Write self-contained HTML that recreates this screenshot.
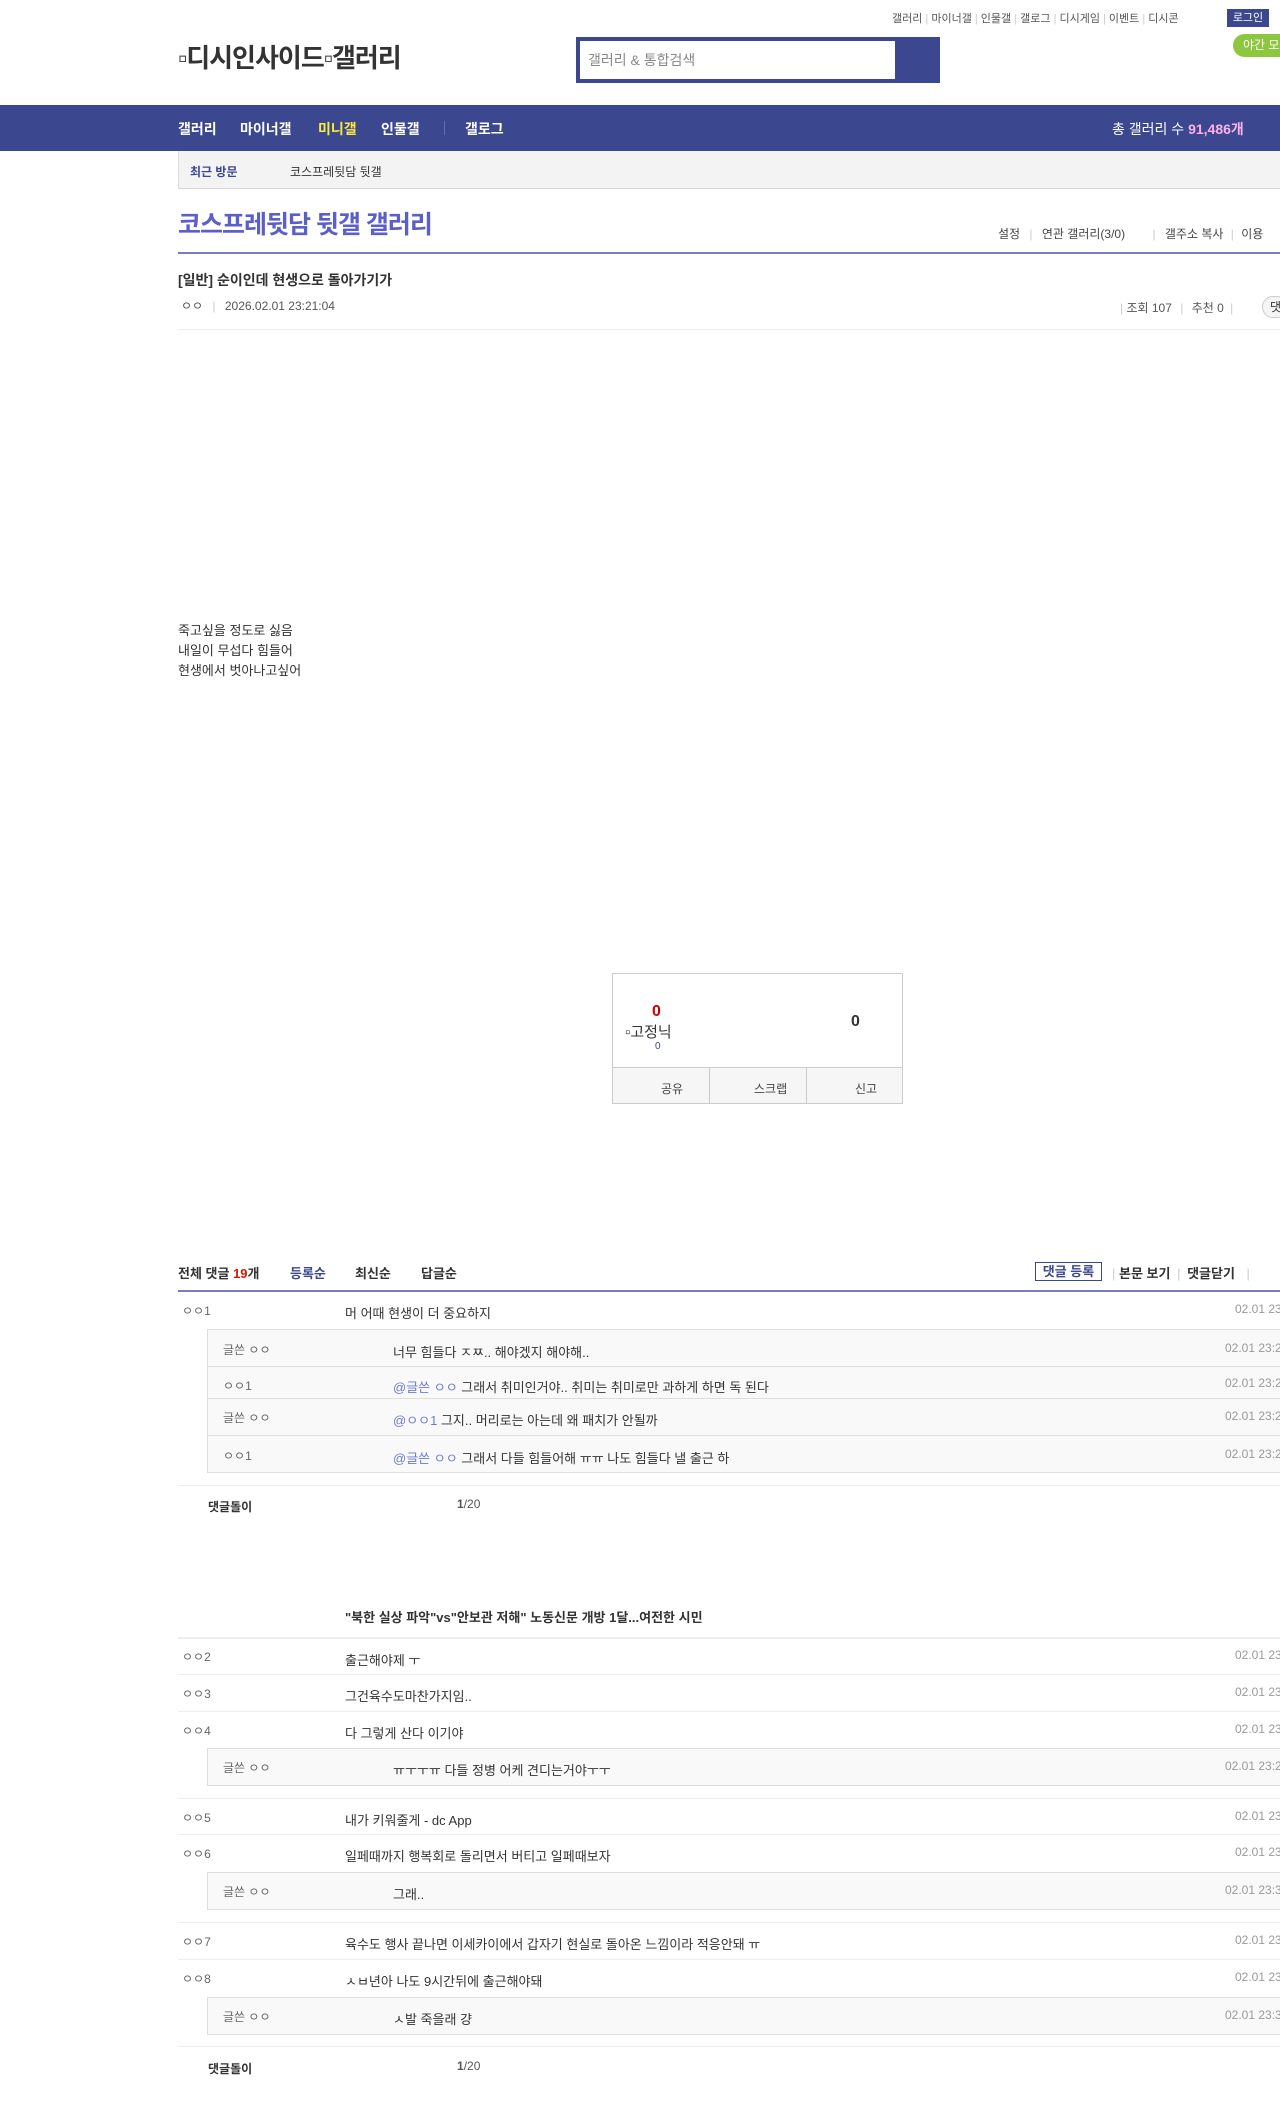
<!DOCTYPE html>
<html><head><meta charset="utf-8">
<style>
*{margin:0;padding:0;box-sizing:border-box}
html,body{width:1280px;height:2112px;overflow:hidden;background:#fff;font-family:"Liberation Sans","Noto Sans CJK KR",sans-serif;color:#333}
.a{position:absolute;white-space:nowrap}
.top{top:10px;font-size:11px;color:#555}
.top i{font-style:normal;color:#ccc}
.nav{position:absolute;left:0;top:105px;width:1280px;height:46px;background:#3b4890}
.nav .a{color:#fff;font-size:14px;font-weight:bold;top:14px}
.row{position:absolute;left:178px;width:1102px;border-bottom:1px solid #eee;font-size:13px}
.row span,.rr span{white-space:nowrap}
.nk{position:absolute;left:4px;font-size:12px;color:#666}
.tx{position:absolute;left:167px;color:#333}
.dt{position:absolute;left:1057px;font-size:12px;color:#999}
.rb{position:absolute;left:207px;width:1073px;background:#f9f9f9;border:1px solid #ddd;border-right:none}
.rr{position:absolute;left:0;width:1073px;border-bottom:1px solid #ddd;font-size:13px}
.rr:last-child{border-bottom:none}
.rr .nk{left:15px}
.rr .tx{left:185px}
.rr .dt{left:1017px}
.at{color:#6c7bd1}
</style></head><body>

<div class="a top" style="left:892px">갤러리 <i>|</i> 마이너갤 <i>|</i> 인물갤 <i>|</i> 갤로그 <i>|</i> 디시게임 <i>|</i> 이벤트 <i>|</i> 디시콘</div>
<div class="a" style="left:1227px;top:9px;width:42px;height:18px;background:#3b4890;color:#fff;font-size:11px;line-height:18px;text-align:center">로그인</div>
<div class="a" style="left:1233px;top:34px;width:60px;height:23px;background:#8dc63f;color:#fff;font-size:12px;line-height:23px;padding-left:10px;border-radius:12px 0 0 12px">야간 모드</div>

<div class="a" style="left:178px;top:38px;font-size:26px;font-weight:bold;color:#333;letter-spacing:-1px">▫디시인사이드▫갤러리</div>

<div class="a" style="left:576px;top:37px;width:364px;height:46px;background:#3b4890"></div>
<div class="a" style="left:580px;top:41px;width:315px;height:38px;background:#fff;font-size:14px;color:#888;line-height:38px;padding-left:8px">갤러리 &amp; 통합검색</div>

<div class="nav">
<div class="a" style="left:178px">갤러리</div>
<div class="a" style="left:240px">마이너갤</div>
<div class="a" style="left:318px;color:#ffeb3b">미니갤</div>
<div class="a" style="left:381px">인물갤</div>
<div class="a" style="left:444px;width:1px;height:14px;background:#6670b0;top:16px"></div>
<div class="a" style="left:465px">갤로그</div>
<div class="a" style="left:1112px;font-weight:normal;font-size:14px">총 갤러리 수 <b style="color:#ffb0e8">91,486개</b></div>
</div>

<div class="a" style="left:178px;top:151px;width:1102px;height:38px;background:#f3f3f3;border-left:1px solid #ddd;border-bottom:1px solid #d6d6d6"></div>
<div class="a" style="left:190px;top:163px;font-size:12px;font-weight:bold;color:#3b4890">최근 방문</div>
<div class="a" style="left:290px;top:163px;font-size:12px;color:#333">코스프레뒷담 뒷갤</div>

<div class="a" style="left:178px;top:205px;font-size:25px;font-weight:bold;color:#5d5fc9;letter-spacing:-1px">코스프레뒷담 뒷갤 갤러리</div>
<div class="a" style="left:998px;top:225px;font-size:12px;color:#444">설정 <span style="color:#ccc;margin:0 6px">|</span> 연관 갤러리(3/0) <span style="color:#ccc;margin:0 6px 0 24px">|</span> 갤주소 복사 <span style="color:#ccc;margin:0 4px">|</span> 이용</div>
<div class="a" style="left:178px;top:252px;width:1102px;height:2px;background:#7b7bc0"></div>

<div class="a" style="left:178px;top:270px;font-size:14px;font-weight:bold;color:#333">[일반] 순이인데 현생으로 돌아가기가</div>
<div class="a" style="left:181px;top:297px;font-size:12px;color:#555">ㅇㅇ <span style="color:#ccc;margin:0 6px">|</span> 2026.02.01 23:21:04</div>
<div class="a" style="left:1120px;top:299px;font-size:12px;color:#555"><span style="color:#ccc">|</span> 조회 107 <span style="color:#ccc;margin:0 5px">|</span> 추천 0 <span style="color:#ccc;margin:0 3px">|</span></div>
<div class="a" style="left:1262px;top:296px;width:26px;height:22px;border:1px solid #ccc;border-radius:11px;background:#f4f4f4;font-size:12px;padding-left:7px;line-height:20px">댓</div>
<div class="a" style="left:178px;top:329px;width:1102px;height:1px;background:#eee"></div>

<div class="a" style="left:178px;top:621px;font-size:13px;line-height:20px;color:#333">죽고싶을 정도로 싫음<br>내일이 무섭다 힘들어<br>현생에서 벗아나고싶어</div>

<div class="a" style="left:612px;top:973px;width:291px;height:131px;border:1px solid #ccc;border-bottom:2px solid #ccc"></div>
<div class="a" style="left:652px;top:1003px;font-size:16px;font-weight:bold;color:#c00">0</div>
<div class="a" style="left:625px;top:1021px;font-size:15px;color:#333">▫고정닉</div>
<div class="a" style="left:655px;top:1041px;font-size:10px;color:#3b4890">0</div>
<div class="a" style="left:851px;top:1013px;font-size:16px;font-weight:bold;color:#333">0</div>
<div class="a" style="left:613px;top:1067px;width:289px;height:36px;background:#f6f6f6;border-top:1px solid #ccc"></div>
<div class="a" style="left:709px;top:1067px;width:1px;height:36px;background:#ccc"></div>
<div class="a" style="left:806px;top:1067px;width:1px;height:36px;background:#ccc"></div>
<div class="a" style="left:661px;top:1080px;font-size:12px;color:#444">공유</div>
<div class="a" style="left:754px;top:1080px;font-size:12px;color:#444">스크랩</div>
<div class="a" style="left:855px;top:1080px;font-size:12px;color:#444">신고</div>

<div class="a" style="left:178px;top:1263px;font-size:13px;font-weight:bold;color:#333">전체 댓글 <span style="color:#d31900">19</span>개</div>
<div class="a" style="left:290px;top:1263px;font-size:13px;font-weight:bold;color:#3b4890">등록순</div>
<div class="a" style="left:355px;top:1263px;font-size:13px;font-weight:bold;color:#333">최신순</div>
<div class="a" style="left:421px;top:1263px;font-size:13px;font-weight:bold;color:#333">답글순</div>
<div class="a" style="left:1035px;top:1262px;width:67px;height:19px;border:1px solid #3b4890;font-size:13px;font-weight:bold;color:#3b4890;text-align:center;line-height:17px">댓글 등록</div>
<div class="a" style="left:1112px;top:1263px;font-size:13px;font-weight:bold;color:#333"><span style="color:#ccc;font-weight:normal">|</span> 본문 보기 <span style="color:#ccc;font-weight:normal;margin:0 3px">|</span> 댓글닫기 <span style="color:#ccc;font-weight:normal;margin-left:8px">|</span></div>
<div class="a" style="left:178px;top:1290px;width:1102px;height:2px;background:#7b7bc0"></div>

<div class="row" style="top:1292px;height:37px;border:none"><span class="nk" style="top:10px">ㅇㅇ1</span><span class="tx" style="top:11px">머 어때 현생이 더 중요하지</span><span class="dt" style="top:10px">02.01 23:21:40</span></div>
<div class="rb" style="top:1329px;height:144px">
<div class="rr" style="top:0;height:37px"><span class="nk" style="top:11px">글쓴 ㅇㅇ</span><span class="tx" style="top:12px">너무 힘들다 ㅈㅉ.. 해야겠지 해야해..</span><span class="dt" style="top:11px">02.01 23:22:10</span></div>
<div class="rr" style="top:37px;height:32px"><span class="nk" style="top:10px">ㅇㅇ1</span><span class="tx" style="top:10px"><span class="at">@글쓴 ㅇㅇ</span> 그래서 취미인거야.. 취미는 취미로만 과하게 하면 독 된다</span><span class="dt" style="top:9px">02.01 23:23:02</span></div>
<div class="rr" style="top:69px;height:37px"><span class="nk" style="top:10px">글쓴 ㅇㅇ</span><span class="tx" style="top:11px"><span class="at">@ㅇㅇ1</span> 그지.. 머리로는 아는데 왜 패치가 안될까</span><span class="dt" style="top:10px">02.01 23:24:11</span></div>
<div class="rr" style="top:106px;height:37px"><span class="nk" style="top:11px">ㅇㅇ1</span><span class="tx" style="top:12px"><span class="at">@글쓴 ㅇㅇ</span> 그래서 다들 힘들어해 ㅠㅠ 나도 힘들다 낼 출근 하</span><span class="dt" style="top:11px">02.01 23:25:40</span></div>
</div>
<div class="a" style="left:178px;top:1485px;width:1102px;height:1px;background:#eee"></div>
<div class="a" style="left:208px;top:1498px;font-size:12px;font-weight:bold;color:#333">댓글돌이</div>
<div class="a" style="left:457px;top:1497px;font-size:12px;color:#555"><b>1</b>/20</div>

<div class="a" style="left:345px;top:1607px;font-size:13px;font-weight:bold;color:#333">"북한 실상 파악"vs"안보관 저해" 노동신문 개방 1달...여전한 시민</div>
<div class="a" style="left:178px;top:1637px;width:1102px;height:2px;background:#eee"></div>

<div class="row" style="top:1639px;height:36px"><span class="nk" style="top:9px">ㅇㅇ2</span><span class="tx" style="top:11px">출근해야제 ㅜ</span><span class="dt" style="top:9px">02.01 23:26:03</span></div>
<div class="row" style="top:1675px;height:37px"><span class="nk" style="top:10px">ㅇㅇ3</span><span class="tx" style="top:11px">그건육수도마찬가지임..</span><span class="dt" style="top:10px">02.01 23:27:13</span></div>
<div class="row" style="top:1712px;height:87px"><span class="nk" style="top:10px">ㅇㅇ4</span><span class="tx" style="top:11px">다 그렇게 산다 이기야</span><span class="dt" style="top:10px">02.01 23:28:04</span></div>
<div class="rb" style="top:1748px;height:38px"><div class="rr" style="top:0;height:36px"><span class="nk" style="top:10px">글쓴 ㅇㅇ</span><span class="tx" style="top:11px">ㅠㅜㅜㅠ 다들 정병 어케 견디는거야ㅜㅜ</span><span class="dt" style="top:10px">02.01 23:29:12</span></div></div>
<div class="row" style="top:1799px;height:36px"><span class="nk" style="top:10px">ㅇㅇ5</span><span class="tx" style="top:11px">내가 키워줄게 - dc App</span><span class="dt" style="top:10px">02.01 23:30:31</span></div>
<div class="row" style="top:1835px;height:88px"><span class="nk" style="top:10px">ㅇㅇ6</span><span class="tx" style="top:11px">일페때까지 행복회로 돌리면서 버티고 일페때보자</span><span class="dt" style="top:10px">02.01 23:31:22</span></div>
<div class="rb" style="top:1872px;height:38px"><div class="rr" style="top:0;height:36px"><span class="nk" style="top:10px">글쓴 ㅇㅇ</span><span class="tx" style="top:11px">그래..</span><span class="dt" style="top:10px">02.01 23:32:01</span></div></div>
<div class="row" style="top:1923px;height:37px"><span class="nk" style="top:10px">ㅇㅇ7</span><span class="tx" style="top:11px">육수도 행사 끝나면 이세카이에서 갑자기 현실로 돌아온 느낌이라 적응안돼 ㅠ</span><span class="dt" style="top:10px">02.01 23:33:40</span></div>
<div class="row" style="top:1960px;height:87px"><span class="nk" style="top:10px">ㅇㅇ8</span><span class="tx" style="top:11px">ㅅㅂ년아 나도 9시간뒤에 출근해야돼</span><span class="dt" style="top:10px">02.01 23:34:51</span></div>
<div class="rb" style="top:1997px;height:38px"><div class="rr" style="top:0;height:36px"><span class="nk" style="top:10px">글쓴 ㅇㅇ</span><span class="tx" style="top:11px">ㅅ발 죽을래 걍</span><span class="dt" style="top:10px">02.01 23:35:20</span></div></div>
<div class="a" style="left:208px;top:2060px;font-size:12px;font-weight:bold;color:#333">댓글돌이</div>
<div class="a" style="left:457px;top:2059px;font-size:12px;color:#555"><b>1</b>/20</div>
</body></html>
